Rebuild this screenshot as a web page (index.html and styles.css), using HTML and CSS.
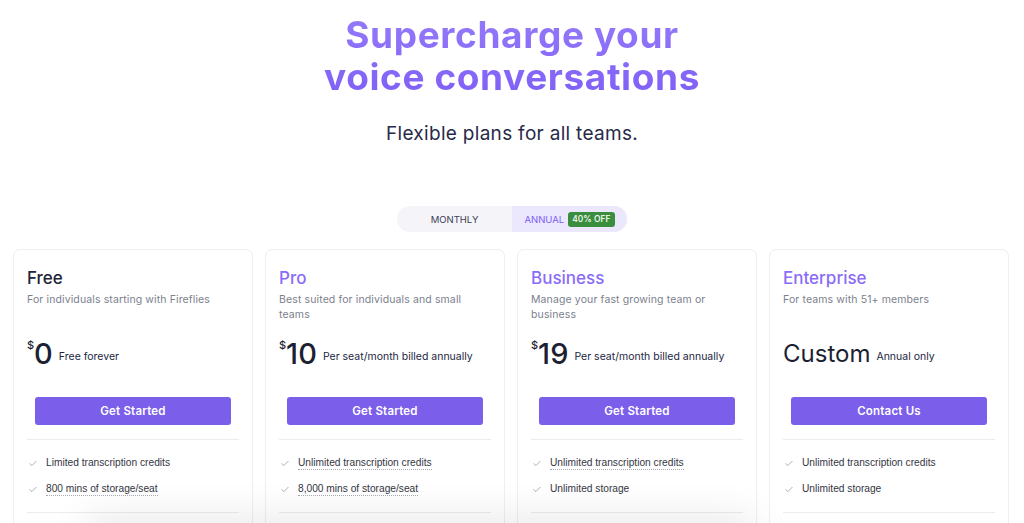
FILE: index.html
```html
<!DOCTYPE html>
<html lang="en">
<head>
<meta charset="utf-8">
<title>Pricing</title>
<link rel="stylesheet" href="styles.css">
</head>
<body>
<main class="page">
  <header class="hero">
    <h1 class="hero-title">Supercharge your<br>voice conversations</h1>
    <p class="hero-sub">Flexible plans for all teams.</p>
  </header>

  <div class="toggle">
    <button class="toggle-opt">MONTHLY</button>
    <button class="toggle-opt active">ANNUAL <span class="badge">40% OFF</span></button>
  </div>

  <section class="plans">
    <article class="card">
      <h2 class="plan-name dark">Free</h2>
      <p class="plan-desc">For individuals starting with Fireflies</p>
      <div class="price"><span class="cur">$</span><span class="amt">0</span><span class="note">Free forever</span></div>
      <a class="cta">Get Started</a>
      <ul class="features">
        <li><svg class="check" viewBox="0 0 10 8"><path d="M1 4.2l2.6 2.4L9 1.2"/></svg><span>Limited transcription credits</span></li>
        <li><svg class="check" viewBox="0 0 10 8"><path d="M1 4.2l2.6 2.4L9 1.2"/></svg><span class="dotted">800 mins of storage/seat</span></li>
      </ul>
    </article>

    <article class="card">
      <h2 class="plan-name">Pro</h2>
      <p class="plan-desc">Best suited for individuals and small teams</p>
      <div class="price"><span class="cur">$</span><span class="amt">10</span><span class="note">Per seat/month billed annually</span></div>
      <a class="cta">Get Started</a>
      <ul class="features">
        <li><svg class="check" viewBox="0 0 10 8"><path d="M1 4.2l2.6 2.4L9 1.2"/></svg><span class="dotted">Unlimited transcription credits</span></li>
        <li><svg class="check" viewBox="0 0 10 8"><path d="M1 4.2l2.6 2.4L9 1.2"/></svg><span class="dotted">8,000 mins of storage/seat</span></li>
      </ul>
    </article>

    <article class="card">
      <h2 class="plan-name">Business</h2>
      <p class="plan-desc">Manage your fast growing team or business</p>
      <div class="price"><span class="cur">$</span><span class="amt">19</span><span class="note">Per seat/month billed annually</span></div>
      <a class="cta">Get Started</a>
      <ul class="features">
        <li><svg class="check" viewBox="0 0 10 8"><path d="M1 4.2l2.6 2.4L9 1.2"/></svg><span class="dotted">Unlimited transcription credits</span></li>
        <li><svg class="check" viewBox="0 0 10 8"><path d="M1 4.2l2.6 2.4L9 1.2"/></svg><span>Unlimited storage</span></li>
      </ul>
    </article>

    <article class="card">
      <h2 class="plan-name">Enterprise</h2>
      <p class="plan-desc">For teams with 51+ members</p>
      <div class="price"><span class="custom">Custom</span><span class="note">Annual only</span></div>
      <a class="cta">Contact Us</a>
      <ul class="features">
        <li><svg class="check" viewBox="0 0 10 8"><path d="M1 4.2l2.6 2.4L9 1.2"/></svg><span>Unlimited transcription credits</span></li>
        <li><svg class="check" viewBox="0 0 10 8"><path d="M1 4.2l2.6 2.4L9 1.2"/></svg><span>Unlimited storage</span></li>
      </ul>
    </article>
  </section>
</main>
<div class="floating-shadow"></div>
</body>
</html>
```

FILE: styles.css
```css
* { box-sizing: border-box; }

html, body {
  margin: 0;
  padding: 0;
  background: #ffffff;
  overflow: hidden;
}

body {
  font-family: "Inter", "Noto Sans", sans-serif;
  color: #23263f;
}

.page {
  width: 1024px;
  height: 523px;
  overflow: hidden;
  display: flex;
  flex-direction: column;
  align-items: center;
}

.page > * {
  flex-shrink: 0;
}

.hero {
  text-align: center;
  padding-top: 14px;
}

.hero-title {
  margin: 0;
  font-size: 37px;
  line-height: 42px;
  font-weight: 700;
  letter-spacing: 0.6px;
  background: linear-gradient(180deg, #957afa 0%, #7f5ff6 100%);
  -webkit-background-clip: text;
  background-clip: text;
  color: transparent;
}

.hero-sub {
  margin: 24px 0 0;
  font-size: 19px;
  line-height: 24px;
  font-weight: 400;
  color: #272a48;
  letter-spacing: 0.3px;
}

.toggle {
  margin-top: 60px;
  display: flex;
  width: 230px;
  height: 26px;
  border-radius: 13px;
  overflow: hidden;
  background: #f5f5f9;
}

.toggle-opt {
  flex: 1;
  border: 0;
  background: transparent;
  font-family: "Inter", sans-serif;
  font-size: 9.5px;
  font-weight: 400;
  color: #3a3d58;
  display: flex;
  align-items: center;
  justify-content: center;
  gap: 4px;
  padding: 0;
}

.toggle-opt.active {
  background: #ebe8fd;
  color: #7b5cf5;
}

.badge {
  background: #3a8e3d;
  color: #ffffff;
  font-size: 8.5px;
  font-weight: 500;
  border-radius: 3px;
  padding: 2px 4px;
  line-height: 11px;
}

.plans {
  margin-top: 17px;
  width: 996px;
  margin-left: -2px;
  display: grid;
  grid-template-columns: repeat(4, 1fr);
  gap: 12px;
}

.card {
  border: 1px solid #eeeef3;
  border-radius: 7px;
  padding: 17px 13px 0;
  height: 300px;
  display: flex;
  flex-direction: column;
}

.plan-name {
  margin: 0;
  font-size: 17px;
  line-height: 22px;
  font-weight: 500;
  color: #8a6cf7;
}

.plan-name.dark {
  color: #222437;
}

.plan-desc {
  margin: 3px 0 0;
  font-size: 10.5px;
  line-height: 15px;
  color: #7c7f8e;
  height: 30px;
  letter-spacing: 0.12px;
}

.price {
  margin-top: 12px;
  display: flex;
  align-items: flex-end;
  height: 36px;
}

.cur {
  font-size: 11px;
  font-weight: 500;
  color: #1d1f33;
  align-self: flex-start;
  margin-top: 4px;
}

.amt {
  font-size: 29px;
  line-height: 32px;
  font-weight: 500;
  color: #1d1f33;
  margin-right: 6px;
}

.custom {
  font-size: 24px;
  line-height: 30px;
  font-weight: 400;
  color: #1d1f33;
  margin-right: 6px;
  margin-bottom: 1px;
}

.note {
  font-size: 10.5px;
  line-height: 14px;
  color: #23263f;
  margin-bottom: 6px;
}

.cta {
  margin: 27px 8px 0;
  height: 28px;
  border-radius: 3px;
  background: #7b5ee9;
  color: #ffffff;
  font-size: 11.5px;
  font-weight: 600;
  display: flex;
  align-items: center;
  justify-content: center;
  letter-spacing: 0.2px;
}

.features {
  list-style: none;
  margin: 14px 0 0;
  padding: 15px 0 15px;
  border-top: 1px solid #ececf0;
  border-bottom: 1px solid #ececf0;
  display: flex;
  flex-direction: column;
  gap: 10px;
}

.features li {
  display: flex;
  align-items: center;
  gap: 9px;
  height: 16px;
  font-family: "Liberation Sans", Arial, sans-serif;
  font-size: 10.2px;
  line-height: 16px;
  color: #34363f;
  padding-left: 2px;
}

.check {
  width: 8px;
  height: 7px;
  fill: none;
  stroke: #a3a4ad;
  stroke-width: 1.1;
  stroke-linecap: round;
  stroke-linejoin: round;
}

.dotted {
  border-bottom: 1px dotted #a8a9b3;
  line-height: 13px;
}

.floating-shadow {
  position: fixed;
  left: 90px;
  bottom: -60px;
  width: 660px;
  height: 60px;
  border-radius: 8px;
  box-shadow: 0 0 40px 6px rgba(0, 0, 0, 0.09);
  background: #ffffff;
}
```
